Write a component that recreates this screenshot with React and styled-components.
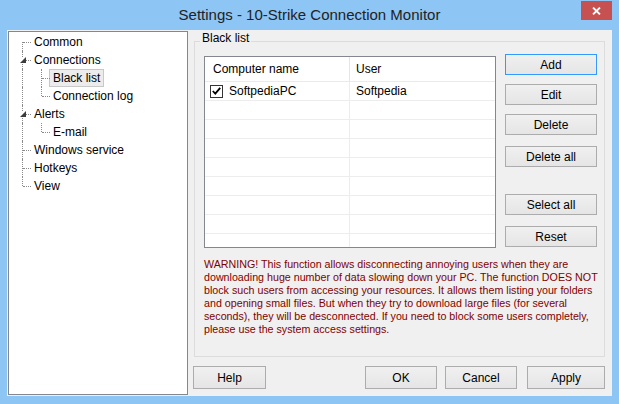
import React from 'react'
import styled, { createGlobalStyle, css } from 'styled-components'

const GlobalStyle = createGlobalStyle`
  html, body {
    margin: 0;
    padding: 0;
  }
  body {
    font-family: "Liberation Sans", Arial, sans-serif;
    font-size: 12px;
    background: #8dc5f5;
  }
  * { box-sizing: border-box; }
`

const treeItems = [
  { label: 'Common', lines: ['first'] },
  { label: 'Connections', lines: ['tee'], expander: true },
  { label: 'Black list', lines: ['pipe', 'tee'], selected: true },
  { label: 'Connection log', lines: ['pipe', 'elbow'] },
  { label: 'Alerts', lines: ['tee'], expander: true },
  { label: 'E-mail', lines: ['pipe', 'elbow'] },
  { label: 'Windows service', lines: ['tee'] },
  { label: 'Hotkeys', lines: ['tee'] },
  { label: 'View', lines: ['elbow'] },
]

const sideButtons = [
  { label: 'Add', gap: 0, focused: true },
  { label: 'Edit', gap: 9 },
  { label: 'Delete', gap: 9 },
  { label: 'Delete all', gap: 11 },
  { label: 'Select all', gap: 27 },
  { label: 'Reset', gap: 11 },
]

const warningLines = [
  'WARNING! This function allows disconnecting annoying users when they are',
  'downloading huge number of data slowing down your PC. The function DOES NOT',
  'block such users from accessing your resources. It allows them listing your folders',
  'and opening small files. But when they try to download large files (for several',
  'seconds), they will be desconnected. If you need to block some users completely,',
  'please use the system access settings.',
]

function Expander() {
  return (
    <ExpanderIcon width="6" height="6" viewBox="0 0 6 6">
      <polygon points="6,0 6,6 0,6" fill="#3c3c3c" />
    </ExpanderIcon>
  )
}

export default function App() {
  return (
    <>
      <GlobalStyle />
      <Window>
        <TitleBar>
          <span />
          <Title>Settings - 10-Strike Connection Monitor</Title>
          <CloseButton>
            <svg width="9" height="8" viewBox="0 0 9 8">
              <path d="M1 0.5 L8 7.5 M8 0.5 L1 7.5" stroke="#fff" strokeWidth="1.8" />
            </svg>
          </CloseButton>
        </TitleBar>

        <Client>
          <Tree>
            {treeItems.map((item) => (
              <TreeRow key={item.label}>
                {item.lines.map((l, i) => (
                  <Gutter key={i} $type={l}>
                    {item.expander && i === 0 && <Expander />}
                  </Gutter>
                ))}
                <TreeLabel $selected={item.selected}>{item.label}</TreeLabel>
              </TreeRow>
            ))}
          </Tree>

          <Pane>
            <GroupBox>
              <GroupTitle>Black list</GroupTitle>
              <ListRow>
                <ListView>
                  <ListHeader>
                    <HeadCell $w={145}>Computer name</HeadCell>
                    <HeadCell>User</HeadCell>
                  </ListHeader>
                  {Array.from({ length: 9 }).map((_, i) => (
                    <ListItem key={i}>
                      <Cell $w={145} $first>
                        {i === 0 && (
                          <>
                            <CheckBox>
                              <svg width="9" height="8" viewBox="0 0 9 8">
                                <path d="M0.8 4 L3.3 6.6 L8.2 0.8" stroke="#000" strokeWidth="1.8" fill="none" />
                              </svg>
                            </CheckBox>
                            SoftpediaPC
                          </>
                        )}
                      </Cell>
                      <Cell>{i === 0 && 'Softpedia'}</Cell>
                    </ListItem>
                  ))}
                </ListView>
                <ButtonColumn>
                  {sideButtons.map((b) => (
                    <Button key={b.label} $mt={b.gap} $focused={b.focused} $h={21} $w={92}>
                      {b.label}
                    </Button>
                  ))}
                </ButtonColumn>
              </ListRow>
              <Warning>
                {warningLines.map((line) => (
                  <WarningLine key={line}>{line}</WarningLine>
                ))}
              </Warning>
            </GroupBox>

            <BottomBar>
              <Button $h={23} $w={73}>Help</Button>
              <Spacer />
              <Button $h={23} $w={72}>OK</Button>
              <Button $h={23} $w={72} $ml={8}>Cancel</Button>
              <Button $h={23} $w={78} $ml={10}>Apply</Button>
            </BottomBar>
          </Pane>
        </Client>
      </Window>
    </>
  )
}

const Window = styled.div`
  width: 619px;
  height: 404px;
  background: #8dc5f5;
  display: flex;
  flex-direction: column;
  overflow: hidden;
`

const TitleBar = styled.div`
  height: 30px;
  display: grid;
  grid-template-columns: 1fr auto 1fr;
  align-items: start;
`

const Title = styled.div`
  font-size: 15px;
  line-height: 30px;
  color: #222;
  white-space: nowrap;
`

const CloseButton = styled.div`
  justify-self: end;
  margin: 1px 7px 0 0;
  width: 31px;
  height: 19px;
  background: #c75050;
  display: flex;
  align-items: center;
  justify-content: center;
`

const Client = styled.div`
  margin: 0 7px 8px 7px;
  height: 366px;
  background: #f0f0f0;
  display: flex;
  padding: 1px;
`

const Tree = styled.div`
  flex-shrink: 0;
  width: 180px;
  border: 1px solid #828790;
  background: #fff;
  padding: 1px 0 0 4px;
`

const TreeRow = styled.div`
  display: flex;
  height: 18px;
  align-items: center;
`

const Gutter = styled.div`
  position: relative;
  width: 19px;
  height: 18px;
  flex-shrink: 0;

  &::before {
    content: '';
    position: absolute;
    left: 9px;
    top: ${(p) => (p.$type === 'first' ? '9px' : '0')};
    bottom: ${(p) => (p.$type === 'elbow' ? '9px' : '0')};
    border-left: 1px dotted #8a8a8a;
  }

  ${(p) =>
    p.$type !== 'pipe' &&
    css`
      &::after {
        content: '';
        position: absolute;
        left: 10px;
        width: 8px;
        top: 9px;
        border-top: 1px dotted #8a8a8a;
      }
    `}
`

const ExpanderIcon = styled.svg`
  position: absolute;
  left: 7px;
  top: 6px;
  background: #fff;
  z-index: 1;
`

const TreeLabel = styled.div`
  margin-left: -2px;
  height: 18px;
  line-height: 16px;
  padding: 0 3px;
  border: 1px solid transparent;
  color: #000;
  white-space: nowrap;

  ${(p) =>
    p.$selected &&
    css`
      background: #ececec;
      border-color: #c8c8c8;
    `}
`

const Pane = styled.div`
  flex: 1;
  min-width: 0;
  display: flex;
  flex-direction: column;
  padding: 0 6px 0 5px;
`

const GroupBox = styled.div`
  position: relative;
  flex: 1;
  margin: 10px 0 0 1px;
  border: 1px solid #dcdcdc;
  padding: 12px 7px 0 9px;
`

const GroupTitle = styled.div`
  position: absolute;
  top: -11px;
  left: 5px;
  padding: 0 2px;
  line-height: 14px;
  background: #f0f0f0;
  color: #000;
`

const ListRow = styled.div`
  display: flex;
  align-items: flex-start;
`

const ListView = styled.div`
  flex-shrink: 0;
  width: 292px;
  height: 192px;
  margin: 2px 9px 0 0;
  border: 1px solid #828790;
  background: #fff;
  overflow: hidden;
`

const ListHeader = styled.div`
  display: flex;
  height: 25px;
  border-bottom: 1px solid #eaeaea;
`

const HeadCell = styled.div`
  width: ${(p) => (p.$w ? `${p.$w}px` : 'auto')};
  flex: ${(p) => (p.$w ? 'none' : '1')};
  padding-left: ${(p) => (p.$w ? '8px' : '6px')};
  line-height: 25px;
  border-right: ${(p) => (p.$w ? '1px solid #e5e5e5' : 'none')};
  color: #000;
`

const ListItem = styled.div`
  display: flex;
  height: 19px;
  border-bottom: 1px solid #ededed;
`

const Cell = styled.div`
  width: ${(p) => (p.$w ? `${p.$w}px` : 'auto')};
  flex: ${(p) => (p.$w ? 'none' : '1')};
  padding-left: ${(p) => (p.$first ? '5px' : '6px')};
  display: flex;
  align-items: center;
  border-right: ${(p) => (p.$w ? '1px solid #ededed' : 'none')};
  color: #000;
  white-space: nowrap;
`

const CheckBox = styled.span`
  width: 13px;
  height: 13px;
  border: 1px solid #333;
  background: #fff;
  display: inline-flex;
  align-items: center;
  justify-content: center;
  margin-right: 6px;
`

const ButtonColumn = styled.div`
  display: flex;
  flex-direction: column;
`

const Button = styled.div`
  flex-shrink: 0;
  width: ${(p) => p.$w}px;
  height: ${(p) => p.$h}px;
  margin-top: ${(p) => p.$mt || 0}px;
  margin-left: ${(p) => p.$ml || 0}px;
  border: 1px solid ${(p) => (p.$focused ? '#3399ff' : '#acacac')};
  background: linear-gradient(#f0f0f0, #e5e5e5);
  display: flex;
  align-items: center;
  justify-content: center;
  color: #000;
  white-space: nowrap;
`

const Warning = styled.div`
  margin-top: 10px;
  color: #800000;
  font-size: 10.7px;
  line-height: 13px;
`

const WarningLine = styled.div`
  white-space: nowrap;
`

const BottomBar = styled.div`
  display: flex;
  margin: 9px 0 6px;
`

const Spacer = styled.div`
  flex: 1;
`
